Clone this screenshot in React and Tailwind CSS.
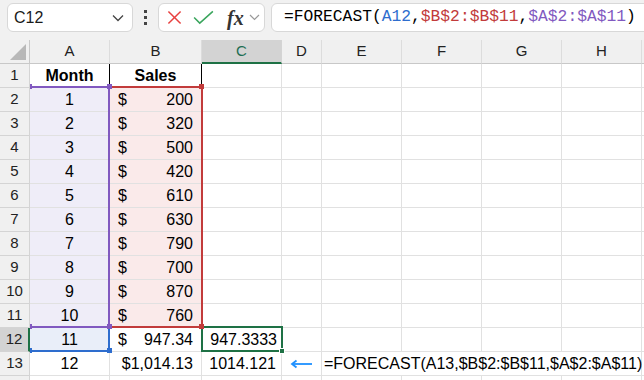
import React from "react";

const WC = ["w-[30px]", "w-[80px]", "w-[92px]", "w-[80px]", "w-[40px]", "w-[80px]", "w-[80px]", "w-[80px]", "w-[80px]", "w-[80px]"];
const LETTERS = ["A", "B", "C", "D", "E", "F", "G", "H", ""];

const cellBase = "shrink-0 h-full border-r border-b border-[#e1e1e1] flex items-center text-[16px] text-black whitespace-nowrap";
const rowHdr = "shrink-0 w-[30px] h-full flex items-center justify-center text-[15px] text-[#222] border-r border-b";

function Money({ v }) {
  return (
    <div className="flex w-full justify-between px-[8px]">
      <span>$</span>
      <span>{v}</span>
    </div>
  );
}

const sales = ["200", "320", "500", "420", "610", "630", "790", "700", "870", "760"];

function DataRow({ n, children }) {
  return (
    <div className="flex h-[24px]">
      <div className={rowHdr + " bg-[#f0f0f0] border-[#d4d4d4]"}>{n}</div>
      {children}
    </div>
  );
}

function EmptyCells({ from }) {
  return WC.slice(from).map((w, i) => <div key={i} className={cellBase + " " + w}></div>);
}

export default function App() {
  return (
    <div className="w-[644px] h-[380px] overflow-hidden bg-white relative" style={{ fontFamily: '"Liberation Sans", Arial, sans-serif' }}>
      {/* Toolbar */}
      <div className="h-[40px] bg-[#f1f1f1] flex items-start pt-[3px] overflow-hidden">
        <div className="shrink-0 ml-[7px] w-[126px] h-[29px] bg-white border border-[#d8d8d8] rounded-[6px] flex items-center justify-between pl-[6px] pr-[8px]">
          <span className="text-[16px] text-[#1a1a1a]">C12</span>
          <svg width="12" height="8" viewBox="0 0 12 8">
            <polyline points="1,1.5 6,6.5 11,1.5" fill="none" stroke="#444" strokeWidth="1.3" />
          </svg>
        </div>
        <div className="shrink-0 w-[25px] h-[29px] flex flex-col items-center justify-center gap-[3px]">
          <div className="w-[3px] h-[3px] bg-[#444]"></div>
          <div className="w-[3px] h-[3px] bg-[#444]"></div>
          <div className="w-[3px] h-[3px] bg-[#444]"></div>
        </div>
        <div className="shrink-0 w-[107px] h-[29px] bg-white border border-[#d8d8d8] rounded-[6px] flex items-center pl-[8px]">
          <svg width="15" height="15" viewBox="0 0 16 16">
            <line x1="1.5" y1="1.5" x2="14.5" y2="14.5" stroke="#e8403f" strokeWidth="1.6" />
            <line x1="14.5" y1="1.5" x2="1.5" y2="14.5" stroke="#e8403f" strokeWidth="1.6" />
          </svg>
          <svg className="ml-[11px]" width="21" height="15" viewBox="0 0 22 16">
            <polyline points="1,8 7,14 21,1.5" fill="none" stroke="#3aa55d" strokeWidth="1.6" />
          </svg>
          <span className="ml-[13px] text-[20px] italic font-bold text-[#333] leading-none" style={{ fontFamily: '"Liberation Serif", "Times New Roman", serif' }}>fx</span>
          <svg className="ml-[5px]" width="11" height="7" viewBox="0 0 11 7">
            <polyline points="1,1 5.5,5.5 10,1" fill="none" stroke="#999" strokeWidth="1.2" />
          </svg>
        </div>
        <div className="shrink-0 ml-[6px] w-[400px] h-[29px] bg-white border border-[#d8d8d8] rounded-[6px] flex items-center pl-[12px] whitespace-nowrap text-[16.3px] text-black" style={{ fontFamily: '"Liberation Mono", "DejaVu Sans Mono", monospace' }}>
          <span>=FORECAST(</span>
          <span className="text-[#2e6dce]">A12</span>
          <span>,</span>
          <span className="text-[#c23b3b]">$B$2:$B$11</span>
          <span>,</span>
          <span className="text-[#8159c0]">$A$2:$A$11</span>
          <span>)</span>
        </div>
      </div>

      {/* Grid */}
      <div className="relative">
        {/* Column headers */}
        <div className="flex h-[24px] bg-[#f0f0f0]">
          <div className="shrink-0 w-[30px] h-full border-r border-b border-[#c8c8c8] relative">
            <svg className="absolute left-0 top-0" width="30" height="24" viewBox="0 0 30 24">
              <polygon points="10,20 26,4 26,20" fill="#b8b8b8" />
            </svg>
          </div>
          {LETTERS.map((l, i) => (
            <div
              key={i}
              className={
                "shrink-0 h-full flex items-center justify-center text-[15px] " +
                WC[i + 1] +
                (l === "C"
                  ? " bg-[#d3d3d3] border-b-2 border-b-[#1e7145] border-r border-r-[#d4d4d4] text-[#1e6e52]"
                  : " border-r border-r-[#dcdcdc] border-b border-b-[#c8c8c8] text-[#222]")
              }
            >
              {l}
            </div>
          ))}
        </div>

        {/* Row 1 */}
        <DataRow n="1">
          <div className={cellBase + " w-[80px] justify-center font-bold !border-r-black"}>Month</div>
          <div className={cellBase + " w-[92px] justify-center font-bold !border-r-black"}>Sales</div>
          <EmptyCells from={3} />
        </DataRow>

        {sales.map((s, i) => (
          <DataRow key={i} n={String(i + 2)}>
            <div className={cellBase + " w-[80px] justify-center bg-[#efedf8]"}>{i + 1}</div>
            <div className={cellBase + " w-[92px] bg-[#faeaea]"}>
              <Money v={s} />
            </div>
            <EmptyCells from={3} />
          </DataRow>
        ))}

        {/* Row 12 */}
        <div className="flex h-[24px]">
          <div className="shrink-0 w-[30px] h-full flex items-center justify-center text-[15px] text-[#222] bg-[#d3d3d3] border-r-2 border-r-[#1e7145] border-b border-b-[#d4d4d4]">12</div>
          <div className={cellBase + " w-[80px] justify-center bg-[#e9eef9]"}>11</div>
          <div className={cellBase + " w-[92px]"}>
            <Money v="947.34" />
          </div>
          <div className={cellBase + " w-[80px] justify-end pr-[4px]"}>947.3333</div>
          <EmptyCells from={4} />
        </div>

        {/* Row 13 */}
        <DataRow n="13">
          <div className={cellBase + " w-[80px] justify-center"}>12</div>
          <div className={cellBase + " w-[92px] justify-end pr-[8px]"}>$1,014.13</div>
          <div className={cellBase + " w-[80px] justify-end pr-[5px]"}>1014.121</div>
          <div className={cellBase + " w-[40px] justify-center"}>
            <svg width="24" height="10" viewBox="0 0 24 10">
              <line x1="2" y1="5" x2="22" y2="5" stroke="#1e90ff" strokeWidth="1.8" />
              <polyline points="6.5,1.5 2,5 6.5,8.5" fill="none" stroke="#1e90ff" strokeWidth="1.8" />
            </svg>
          </div>
          <div className={cellBase + " w-[320px] pl-[2px]"}>=FORECAST(A13,$B$2:$B$11,$A$2:$A$11)</div>
          <div className={cellBase + " w-[80px]"}></div>
        </DataRow>

        {/* Row 14 */}
        <DataRow n="">
          <EmptyCells from={1} />
        </DataRow>

        {/* Range overlays */}
        <div className="absolute inset-0 pointer-events-none">
          <div className="absolute left-[30px] top-[286px] w-[80px] h-[26px] border-2 border-l-0 border-[#2e6dce]"></div>
          <div className="absolute left-[30px] top-[46px] w-[80px] h-[242px] border-t-2 border-r-2 border-b-2 border-[#8159c0]"></div>
          <div className="absolute left-[110px] top-[46px] w-[93px] h-[242px] border-t-2 border-r-2 border-b-2 border-[#c23b3b]"></div>
          <div className="absolute left-[201px] top-[286px] w-[82px] h-[26px] border-2 border-[#1e7145]"></div>

          <div className="absolute left-[30px] top-[44px] w-[2px] h-[5px] bg-[#8159c0]"></div>
          <div className="absolute left-[107px] top-[44px] w-[5px] h-[5px] bg-[#8159c0]"></div>
          <div className="absolute left-[199px] top-[44px] w-[5px] h-[5px] bg-[#c23b3b]"></div>
          <div className="absolute left-[30px] top-[284px] w-[2px] h-[5px] bg-[#8159c0]"></div>
          <div className="absolute left-[107px] top-[284px] w-[5px] h-[5px] bg-[#8159c0]"></div>
          <div className="absolute left-[199px] top-[284px] w-[5px] h-[5px] bg-[#c23b3b]"></div>
          <div className="absolute left-[30px] top-[308px] w-[2px] h-[5px] bg-[#2e6dce]"></div>
          <div className="absolute left-[107px] top-[308px] w-[5px] h-[5px] bg-[#2e6dce]"></div>
          <div className="absolute left-[279px] top-[308px] w-[6px] h-[6px] bg-[#1e7145] border border-white"></div>
        </div>
      </div>
    </div>
  );
}
